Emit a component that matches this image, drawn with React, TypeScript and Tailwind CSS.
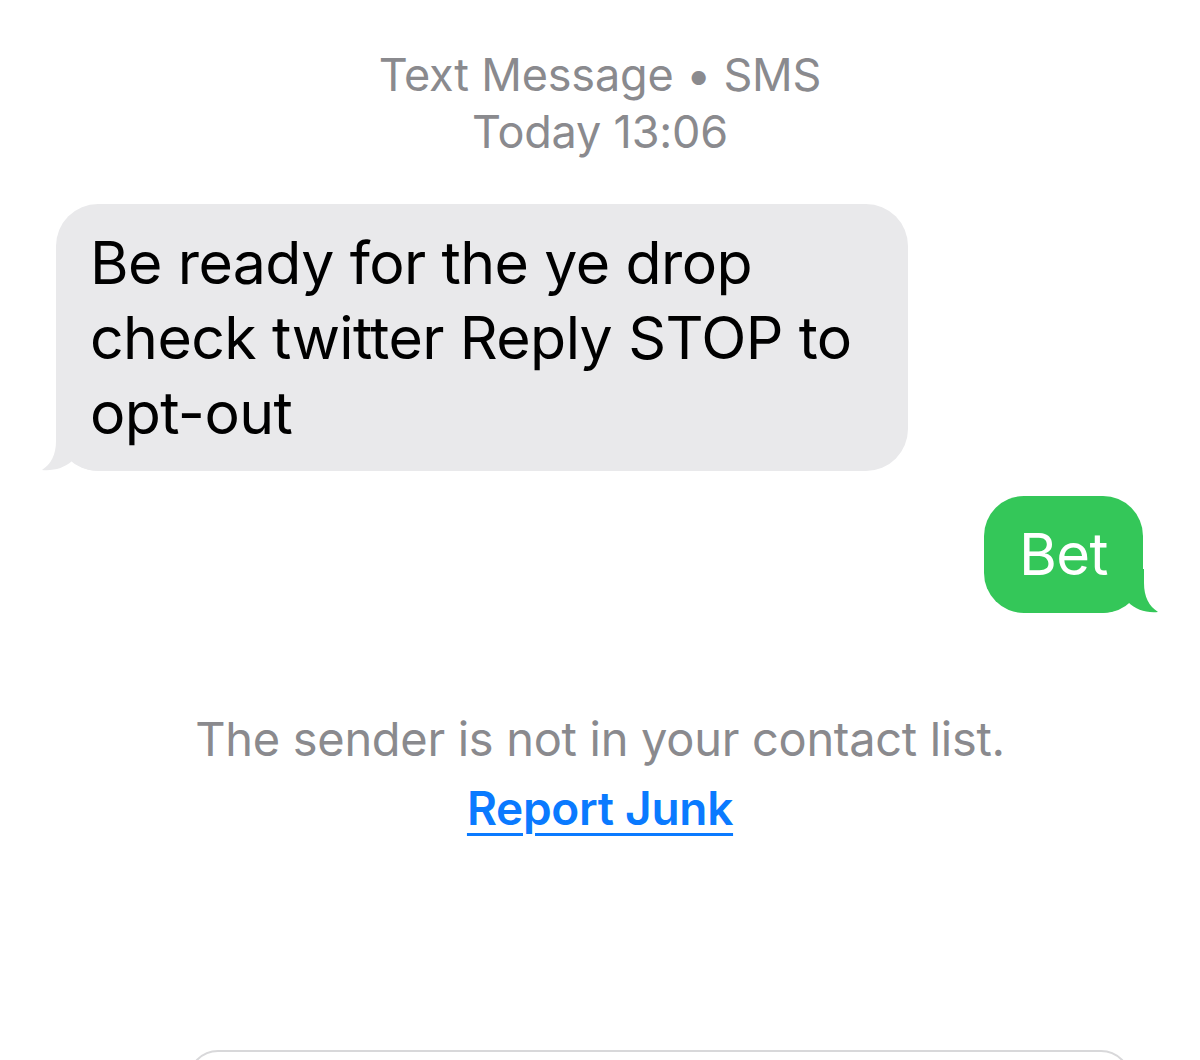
import React from "react";

const font = { fontFamily: "Inter, 'Liberation Sans', sans-serif" };

export default function App() {
  return (
    <div
      className="w-[1200px] h-[1060px] bg-white overflow-hidden flex flex-col"
      style={font}
    >
      <div className="pt-[46px] flex flex-col items-center text-[#8a8a8e] text-[45px] leading-[57px] tracking-[-0.2px]">
        <div>Text Message • SMS</div>
        <div>Today 13:06</div>
      </div>

      <div className="mt-[44px] pl-[56px]">
        <div className="relative w-[852px] h-[267px] bg-[#e9e9eb] rounded-[42px] pl-[34px] pt-[21px] text-black text-[59px] leading-[75px] tracking-[-0.6px]">
          <svg
            className="absolute left-[-16px] bottom-0"
            width="60"
            height="44"
            viewBox="0 0 60 44"
          >
            <path
              d="M16 0 L16 14 C16 28 11 37 2 43 C14 44 24 41 32 34 C40 41 50 44 60 44 L60 0 Z"
              fill="#e9e9eb"
            />
          </svg>
          <div className="relative">
            Be ready for the ye drop
            <br />
            check twitter Reply STOP to
            <br />
            opt-out
          </div>
        </div>
      </div>

      <div className="mt-[25px] flex justify-end pr-[57px]">
        <div className="relative w-[159px] h-[117px] bg-[#34c759] rounded-[40px] flex items-center justify-center text-white text-[58px] tracking-[-0.6px]">
          <svg
            className="absolute right-[-17px] bottom-0"
            width="60"
            height="44"
            viewBox="0 0 60 44"
          >
            <path
              d="M44 0 L44 14 C44 28 49 37 58 43 C46 44 36 41 28 33 C20 41 10 44 0 44 L0 0 Z"
              fill="#34c759"
            />
          </svg>
          <span className="relative">Bet</span>
        </div>
      </div>

      <div className="mt-[97px] flex flex-col items-center">
        <div className="text-[#8a8a8e] text-[47px] leading-[57px] tracking-[-0.3px]">
          The sender is not in your contact list.
        </div>
        <div className="mt-[13px] text-[#0a7aff] text-[46px] leading-[57px] tracking-[-0.3px] font-semibold underline decoration-[3px] underline-offset-[8px]">
          Report Junk
        </div>
      </div>

      <div className="flex-1" />
      <div className="pl-[188px] pr-[69px] h-[10px] shrink-0">
        <div className="w-full h-[60px] border-2 border-[#d8d8da] rounded-[36px]" />
      </div>
    </div>
  );
}
